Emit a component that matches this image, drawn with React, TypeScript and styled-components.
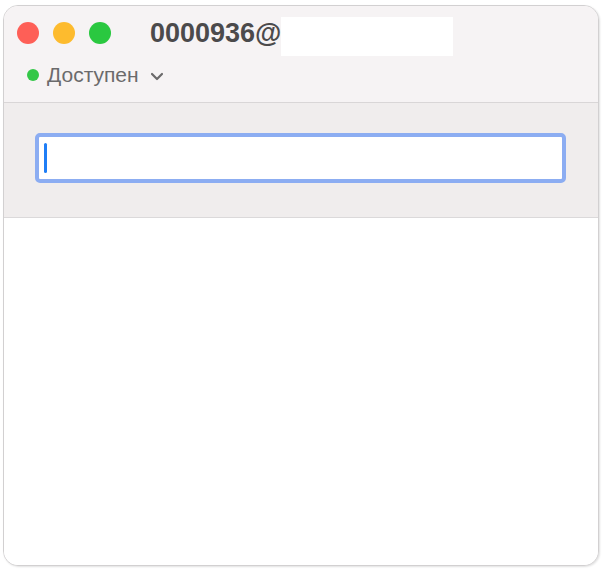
import React from "react";
import styled, { createGlobalStyle } from "styled-components";

const Global = createGlobalStyle`
  html, body { margin: 0; padding: 0; background: #ffffff; }
  body { font-family: "Liberation Sans", Arial, sans-serif; }
  * { box-sizing: border-box; }
`;

const Page = styled.div`
  width: 605px;
  height: 573px;
  padding: 5px 0 0 3px;
  background: #ffffff;
`;

const Window = styled.div`
  width: 596px;
  height: 561px;
  border: 1px solid #d2d0d1;
  border-radius: 15px;
  overflow: hidden;
  background: #ffffff;
  display: flex;
  flex-direction: column;
  box-shadow: 1px 1px 2px rgba(0, 0, 0, 0.12);
`;

const TitleBar = styled.div`
  height: 97px;
  flex: none;
  background: #f6f3f4;
  border-bottom: 1px solid #d9d6d7;
  display: flex;
  flex-direction: column;
  padding: 16px 0 0 13px;
`;

const TopRow = styled.div`
  display: flex;
  align-items: center;
  height: 22px;
`;

const Lights = styled.div`
  display: flex;
  gap: 14px;
  margin-right: 39px;
`;

const Light = styled.span<{ $color: string }>`
  width: 22px;
  height: 22px;
  border-radius: 50%;
  background: ${(p) => p.$color};
`;

const Title = styled.span`
  font-size: 27px;
  font-weight: 700;
  color: #4b4a4b;
  line-height: 22px;
`;

const Redacted = styled.span`
  width: 172px;
  height: 39px;
  background: #ffffff;
  margin-top: 7px;
`;

const StatusRow = styled.div`
  display: flex;
  align-items: center;
  height: 24px;
  margin-top: 19px;
  padding-left: 10px;
  color: #6b6a6b;
`;

const Dot = styled.span`
  width: 12px;
  height: 12px;
  border-radius: 50%;
  background: #34c748;
  margin-right: 8px;
`;

const StatusText = styled.span`
  font-size: 21px;
  line-height: 24px;
`;

const Chevron = styled.svg`
  margin-left: 11px;
  margin-top: 2px;
`;

const SearchArea = styled.div`
  height: 115px;
  flex: none;
  background: #f0eded;
  border-bottom: 1px solid #dbd9da;
  padding: 30px 32px 0 31px;
`;

const SearchBox = styled.div`
  height: 50px;
  background: #ffffff;
  border: 4px solid #8cadf2;
  border-radius: 5px;
  display: flex;
  align-items: center;
  padding-left: 5px;
`;

const Caret = styled.span`
  width: 3px;
  height: 30px;
  border-radius: 2px;
  background: #1f7ef6;
`;

const Body = styled.div`
  flex: 1;
  background: #ffffff;
`;

export default function App() {
  return (
    <Page>
      <Global />
      <Window>
        <TitleBar>
          <TopRow>
            <Lights>
              <Light $color="#fe5f57" />
              <Light $color="#fdbb2e" />
              <Light $color="#2ac840" />
            </Lights>
            <Title>0000936@</Title>
            <Redacted />
          </TopRow>
          <StatusRow>
            <Dot />
            <StatusText>Доступен</StatusText>
            <Chevron width="14" height="9" viewBox="0 0 14 9">
              <path d="M2 2 L7 7 L12 2" fill="none" stroke="#6b6a6b" strokeWidth="2.2" strokeLinecap="round" strokeLinejoin="round" />
            </Chevron>
          </StatusRow>
        </TitleBar>
        <SearchArea>
          <SearchBox>
            <Caret />
          </SearchBox>
        </SearchArea>
        <Body />
      </Window>
    </Page>
  );
}
